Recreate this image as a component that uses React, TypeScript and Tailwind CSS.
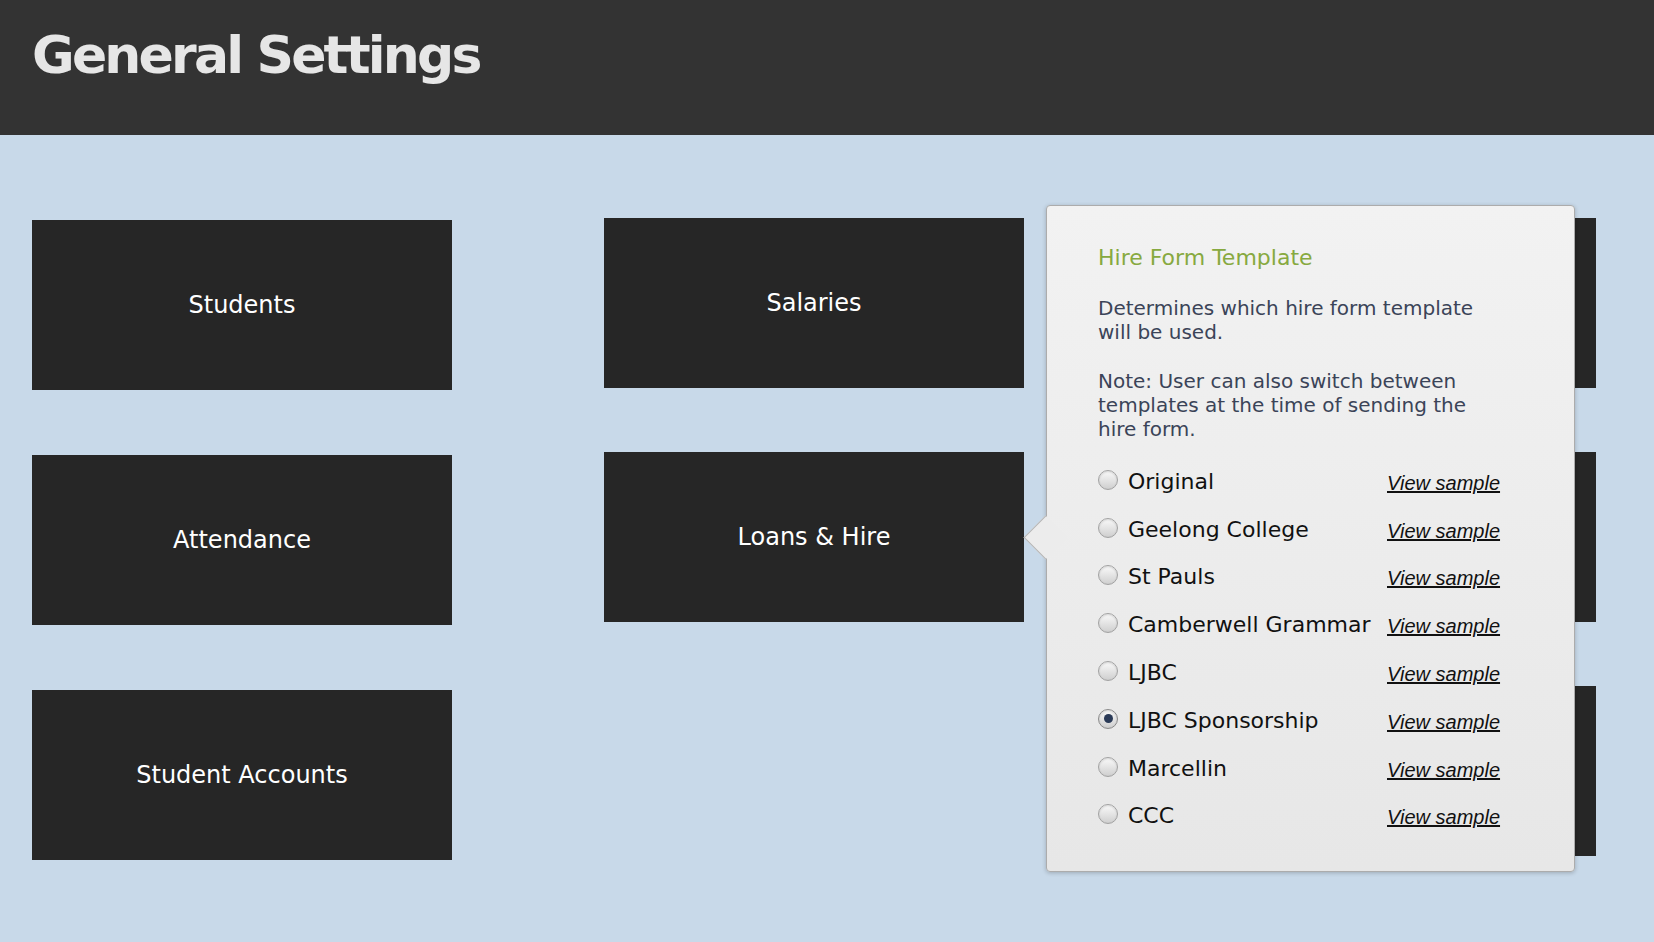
import React, { useState } from 'react';

const templates = [
  'Original',
  'Geelong College',
  'St Pauls',
  'Camberwell Grammar',
  'LJBC',
  'LJBC Sponsorship',
  'Marcellin',
  'CCC',
];

const Tile: React.FC<{ label?: string; children?: React.ReactNode }> = ({ label, children }) => (
  <div className="relative flex h-[170px] w-[420px] items-center justify-center bg-[#262626]">
    {label && <span className="text-[24px] leading-[28px] text-white">{label}</span>}
    {children}
  </div>
);

const Radio: React.FC<{ checked: boolean; onClick: () => void }> = ({ checked, onClick }) => (
  <span
    onClick={onClick}
    className={`flex h-[20px] w-[20px] shrink-0 -translate-y-[2px] cursor-pointer items-center justify-center rounded-full border bg-linear-to-b from-[#fafafa] to-[#cfcfcf] shadow-[inset_0_1px_2px_rgba(0,0,0,0.14)] ${
      checked ? 'border-[#8a8a8a]' : 'border-[#a2a2a2]'
    }`}
  >
    {checked && <span className="h-[9px] w-[9px] rounded-full bg-[#2a3a57]" />}
  </span>
);

const HireFormPopover: React.FC = () => {
  const [selected, setSelected] = useState('LJBC Sponsorship');

  return (
    <div className="absolute left-[calc(100%+22px)] top-[-247px] z-10 w-[529px] rounded-[4px] border border-[#acacac] bg-linear-to-b from-[#f2f2f2] to-[#e7e7e7] pb-[31px] pl-[51px] pr-[70px] pt-[39px] shadow-[0_1px_4px_rgba(0,0,0,0.22)]">
      {/* pointer towards the tile */}
      <span className="absolute left-[-17px] top-[316px] h-[31px] w-[31px] rotate-45 border-b border-l border-[#b4b4b4] bg-[#ececec]" />

      <h3 className="text-[22px] leading-[26px] text-[#87a940]">Hire Form Template</h3>
      <p className="mt-[25px] max-w-[401px] text-[20px] leading-[24px] text-[#3b4458]">
        Determines which hire form template will be used.
      </p>
      <p className="mt-[25px] max-w-[401px] text-[20px] leading-[24px] text-[#3b4458]">
        Note: User can also switch between templates at the time of sending the hire form.
      </p>

      <div className="mt-[17px]">
        {templates.map((name) => (
          <div key={name} className="grid h-[47.8px] grid-cols-[289px_1fr] items-center">
            <label className="flex items-center gap-[10px]" onClick={() => setSelected(name)}>
              <Radio checked={selected === name} onClick={() => setSelected(name)} />
              <span className="whitespace-nowrap text-[22px] leading-[26px] text-[#111]">{name}</span>
            </label>
            <a
              href="#"
              className="translate-y-[1px] whitespace-nowrap font-['Liberation_Sans',Arial,sans-serif] text-[20px] italic leading-[26px] text-[#111] underline"
            >
              View sample
            </a>
          </div>
        ))}
      </div>
    </div>
  );
};

const App: React.FC = () => {
  return (
    <div className="min-h-screen bg-[#c8d9e9] font-['DejaVu_Sans',Verdana,sans-serif]">
      <header className="h-[135px] bg-[#333333] px-[32px] pt-[29px]">
        <h1 className="text-[52px] font-bold leading-[52px] tracking-[-2.8px] text-[#e6e6e6]">General Settings</h1>
      </header>

      <main className="flex gap-[152px] px-[32px]">
        <div className="flex flex-col gap-[65px] pt-[85px]">
          <Tile label="Students" />
          <Tile label="Attendance" />
          <Tile label="Student Accounts" />
        </div>

        <div className="flex flex-col gap-[64px] pt-[83px]">
          <Tile label="Salaries" />
          <Tile label="Loans & Hire">
            <HireFormPopover />
          </Tile>
        </div>

        <div className="flex flex-col gap-[64px] pt-[83px]">
          <Tile />
          <Tile />
          <Tile />
        </div>
      </main>
    </div>
  );
};

export default App;
